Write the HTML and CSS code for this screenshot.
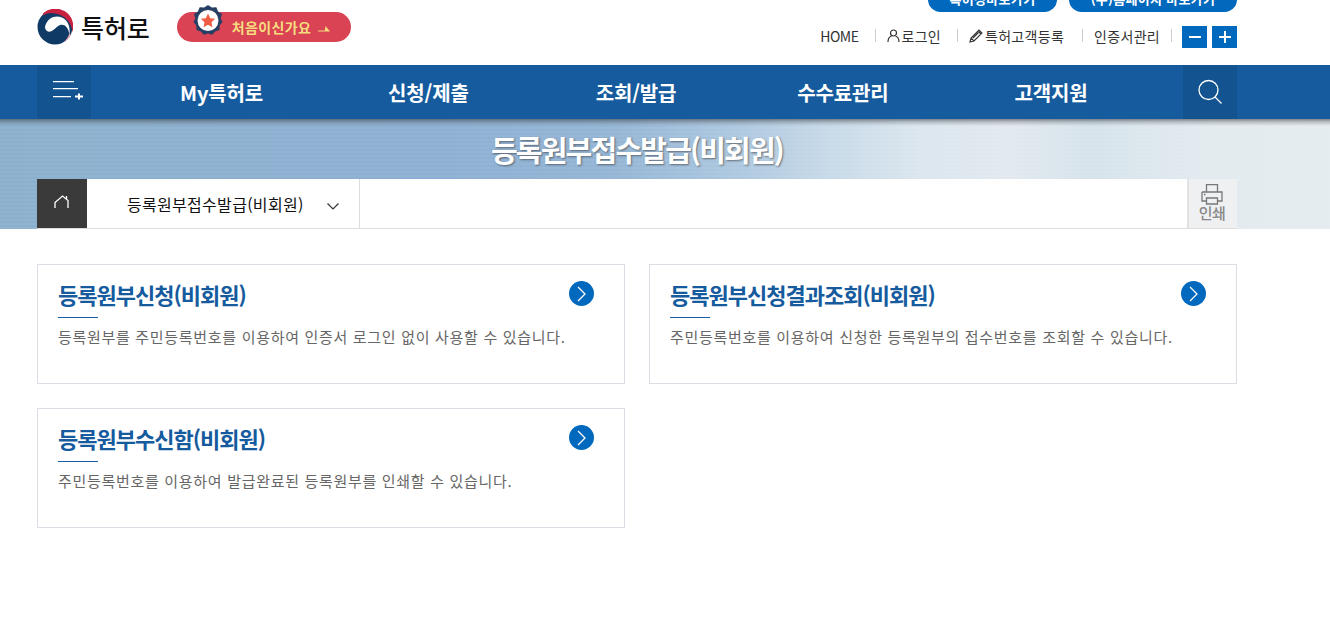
FILE: index.html
```html
<!DOCTYPE html>
<html lang="ko">
<head>
<meta charset="utf-8">
<title>등록원부접수발급(비회원)</title>
<link rel="stylesheet" href="styles.css">
</head>
<body>
<header class="top">
  <div class="top-in">
    <div class="brand">
      <svg class="logo" width="36" height="36" viewBox="0 0 36 36">
        <circle cx="18" cy="18" r="17.500" fill="#0f3a66"/>
        <path d="M6 4.500A18 18 0 0 1 35.500 23 C34.500 13 27 5.500 18 4.500 13.500 4 9.500 4 6 6.500z" fill="#c8203f"/>
        <path d="M8.500 16C11 9 18 5.500 25 8.500c6 2.500 8.500 9.500 7.500 17C31 16 25 13.500 20.500 17.500c-3.500 3-7 7-10.500 4.500-1.800-1.300-2.500-3.500-1.500-6z" fill="#fff"/>
        <path d="M33.500 26c-1.500 3.500-4 6-7 7.800 2.500-2.500 5-6 6-10z" fill="#e9a3ae"/>
      </svg>
      <span class="brand-name">특허로</span>
    </div>
    <a class="first" href="#">
      <svg class="badge" width="30" height="32" viewBox="0 0 30 32">
        <path d="M15 0l3.800 2.500 4.500-.3 1.800 4.200 3.900 2.500-1.300 4.300L29.500 17l-2.800 3.500-.2 4.500-4.300 1.400-3 3.300-4.200-1.200-4.200 1.200-3-3.300L3.500 25l-.2-4.500L.5 17l1.800-3.800L1 8.900l3.900-2.500 1.800-4.200 4.500.3z" fill="#263f63"/>
        <circle cx="15" cy="15.500" r="10.500" fill="#fff"/>
        <path d="M15 8.500l2.200 4.700 5 .6-3.700 3.400 1 5L15 19.700l-4.500 2.500 1-5-3.700-3.400 5-.6z" fill="#ef5d45"/>
      </svg>
      <span class="first-text">처음이신가요</span>
      <svg class="first-arrow" width="12" height="6" viewBox="0 0 12 6"><path d="M0 4.500h7V3.200L7.500 0l4.500 5.500H0z" fill="#f6dc7f"/></svg>
    </a>
    <div class="util">
      <div class="util-btns">
        <a class="pill pill-a" href="#">특허청바로가기</a>
        <a class="pill pill-b" href="#">(주)홈페이지 바로가기</a>
      </div>
      <div class="util-links">
        <a class="ul ul-home" href="#">HOME</a>
        <a class="ul ul-login" href="#"><svg width="13" height="14" viewBox="0 0 13 14"><circle cx="6.500" cy="4" r="3" fill="none" stroke="#333" stroke-width="1.200"/><path d="M1 13c0-4 2-5.500 3.500-6M12 13c0-4-2-5.500-3.500-6" fill="none" stroke="#333" stroke-width="1.200"/></svg>로그인</a>
        <a class="ul ul-reg" href="#"><svg width="15" height="14" viewBox="0 0 15 14"><path d="M1 13l1-4 8-8 3 3-8 8zM9 2l3 3M2 9l3 3M4 9l6-6" fill="none" stroke="#333" stroke-width="1.100"/></svg>특허고객등록</a>
        <a class="ul ul-cert" href="#">인증서관리</a>
        <span class="zoom-btns">
          <button class="zb" aria-label="축소"><svg width="12" height="12" viewBox="0 0 12 12"><path d="M0 6h12" stroke="#fff" stroke-width="2"/></svg></button>
          <button class="zb" aria-label="확대"><svg width="12" height="12" viewBox="0 0 12 12"><path d="M0 6h12M6 0v12" stroke="#fff" stroke-width="2"/></svg></button>
        </span>
      </div>
    </div>
  </div>
</header>

<nav class="gnb">
  <div class="gnb-in">
    <button class="gnb-ico gnb-menu" aria-label="전체메뉴">
      <svg width="30" height="19" viewBox="0 0 30 19"><path d="M0 .7h21M0 7.700h25M0 15.700h18" stroke="#fff" stroke-width="1.300"/><path d="M22 15.500h8M26 12.500v6" stroke="#fff" stroke-width="2"/></svg>
    </button>
    <ul class="gnb-list">
      <li class="g1">My특허로</li>
      <li class="g2">신청/제출</li>
      <li class="g3">조회/발급</li>
      <li class="g4">수수료관리</li>
      <li class="g5">고객지원</li>
    </ul>
    <button class="gnb-ico" aria-label="검색">
      <svg width="26" height="26" viewBox="0 0 26 26"><circle cx="11.500" cy="11" r="9.500" fill="none" stroke="#fff" stroke-width="1.300"/><path d="M18 18l6.500 6.500" stroke="#fff" stroke-width="1.300"/></svg>
    </button>
  </div>
</nav>

<section class="banner">
  <h1 class="banner-title">등록원부접수발급(비회원)</h1>
  <div class="crumb-wrap">
    <div class="crumb">
      <a class="crumb-home" href="#" aria-label="홈"><svg width="16" height="14" viewBox="0 0 16 14"><path d="M1 13V7.500L8.500 1 14 5.500V13M12.500 1v3" fill="none" stroke="#fff" stroke-width="1.300"/></svg></a>
      <div class="crumb-sel">
        <span>등록원부접수발급(비회원)</span>
        <svg width="12" height="7" viewBox="0 0 12 7"><path d="M.5.500L6 6l5.500-5.500" fill="none" stroke="#333" stroke-width="1.200"/></svg>
      </div>
      <div class="crumb-fill"></div>
      <a class="crumb-print" href="#">
        <svg width="22" height="21" viewBox="0 0 22 21"><path d="M5.500 8V.7h11V8M1 8h20v9h-4M5 17H1V8M5.500 14h11v6h-11zM3 10.500h1.500" fill="none" stroke="#777" stroke-width="1.300"/></svg>
        <span>인쇄</span>
      </a>
    </div>
  </div>
</section>

<main class="cards">
  <a class="card" href="#">
    <h2 class="card-title">등록원부신청(비회원)</h2>
    <p class="card-desc">등록원부를 주민등록번호를 이용하여 인증서 로그인 없이 사용할 수 있습니다.</p>
    <span class="go"><svg width="9" height="16" viewBox="0 0 9 16"><path d="M1 1l7 7-7 7" fill="none" stroke="#fff" stroke-width="1.300"/></svg></span>
  </a>
  <a class="card" href="#">
    <h2 class="card-title">등록원부신청결과조회(비회원)</h2>
    <p class="card-desc">주민등록번호를 이용하여 신청한 등록원부의 접수번호를 조회할 수 있습니다.</p>
    <span class="go"><svg width="9" height="16" viewBox="0 0 9 16"><path d="M1 1l7 7-7 7" fill="none" stroke="#fff" stroke-width="1.300"/></svg></span>
  </a>
  <a class="card" href="#">
    <h2 class="card-title">등록원부수신함(비회원)</h2>
    <p class="card-desc">주민등록번호를 이용하여 발급완료된 등록원부를 인쇄할 수 있습니다.</p>
    <span class="go"><svg width="9" height="16" viewBox="0 0 9 16"><path d="M1 1l7 7-7 7" fill="none" stroke="#fff" stroke-width="1.300"/></svg></span>
  </a>
</main>
</body>
</html>
```

FILE: styles.css
```css
* { box-sizing: border-box; }
html, body { margin: 0; padding: 0; background: #fff; overflow: hidden; }
body { font-family: "Noto Sans CJK KR", "Noto Sans", sans-serif; color: #333; height: 625px; }
a { text-decoration: none; color: inherit; }
h1, h2, p, ul { margin: 0; padding: 0; }
button { border: 0; padding: 0; cursor: pointer; }

.top { height: 65px; overflow: hidden; }
.top-in { width: 1200px; margin-left: 37px; display: flex; align-items: flex-start; height: 65px; }
.brand { display: flex; align-items: center; margin-top: 9px; }
.logo { display: block; }
.brand-name { font-size: 25px; line-height: 36px; color: #111; margin-left: 8px; letter-spacing: -.1px; font-weight: 500; }
.first { position: relative; display: flex; align-items: center; margin-left: 27px; margin-top: 12px; width: 174px; height: 30px; border-radius: 15px; background: #d94353; }
.badge { position: absolute; left: 16px; top: -7px; }
.first-text { margin-left: 55px; font-size: 14px; font-weight: 700; color: #f6dc7f; letter-spacing: .4px; }
.first-arrow { margin-left: 7px; margin-top: 3px; }

.util { margin-left: auto; display: flex; flex-direction: column; align-items: flex-end; }
.util-btns { display: flex; gap: 12px; margin-top: -13px; height: 25px; }
.pill { display: block; height: 25px; line-height: 24px; border-radius: 13px; background: #0068bd; color: #fff; font-size: 13px; font-weight: 700; text-align: center; letter-spacing: .3px; }
.pill-a { width: 129px; }
.pill-b { width: 168px; }
.util-links { display: flex; align-items: center; margin-top: 14px; height: 22px; }
.ul { display: flex; align-items: center; font-size: 14px; color: #333; height: 22px; letter-spacing: .3px; padding-bottom: 2px; }
.ul svg { margin-right: 1px; }
.ul + .ul { position: relative; }
.ul + .ul::before { content: ""; position: absolute; left: -12px; top: 3px; width: 1px; height: 13px; background: #ccc; }
.ul-home { margin-right: 29px; letter-spacing: -.5px; }
.ul-login { margin-right: 28px; }
.ul-reg { margin-right: 30px; }
.ul-cert { margin-right: 22px; position: relative; }
.ul-cert::after { content: ""; position: absolute; right: -12px; top: 3px; width: 1px; height: 13px; background: #ccc; }
.zoom-btns { display: flex; gap: 5px; }
.zb { width: 25px; height: 22px; background: #0068bd; display: flex; align-items: center; justify-content: center; }

.gnb { height: 54px; background: #155b9e; }
.gnb-in { width: 1200px; margin-left: 37px; display: flex; height: 54px; }
.gnb-ico { width: 54px; height: 54px; background: #135390; display: flex; align-items: center; justify-content: center; }
.gnb-menu { padding: 0 0 4px 8px; }
.gnb-list { flex: 1; list-style: none; position: relative; display: flex; align-items: center; font-size: 20px; font-weight: 700; color: #fff; letter-spacing: -.15px; }
.gnb-list li { white-space: nowrap; }
.g1 { margin-left: 89px; }
.g2 { margin-left: 125px; }
.g3 { margin-left: 127px; }
.g4 { margin-left: 121px; }
.g5 { margin-left: 126px; }

.banner { height: 110px; display: flex; flex-direction: column; background:
  linear-gradient(180deg, rgba(60,65,70,.6) 0, rgba(60,65,70,.25) 3px, rgba(60,65,70,0) 7px),
  repeating-linear-gradient(180deg, rgba(255,255,255,.05) 0 2px, rgba(255,255,255,0) 2px 4px),
  linear-gradient(90deg, #8bb0cd 0%, #8dafd3 33%, #94b5d5 46%, #afc9e0 56%, #c6d9e8 62%, #dbe6ee 69%, #e2e9ef 76%, #d6e3eb 82%, #e2eaef 90%, #e5ecf0 100%); }
.banner-title { height: 60px; line-height: 60px; text-align: center; font-size: 29px; font-weight: 700; color: #fff; letter-spacing: -1.8px; padding-right: 56px; text-shadow: 1px 1px 2px rgba(50,50,50,.6); }
.crumb-wrap { height: 50px; }
.crumb { width: 1200px; margin-left: 37px; height: 50px; display: flex; background: #fff; border-bottom: 1px solid #ddd; }
.crumb-home { width: 50px; background: #3a3a3a; display: flex; align-items: center; justify-content: center; padding-bottom: 4px; }
.crumb-sel { width: 273px; display: flex; align-items: center; font-size: 16px; color: #111; letter-spacing: .3px; padding-left: 40px; border-right: 1px solid #ddd; padding-top: 1px; }
.crumb-sel svg { margin-left: 23px; margin-top: 4px; }
.crumb-fill { flex: 1; }
.crumb-print { width: 50px; background: #eff0f2; border-left: 2px solid #e2e2e2; display: flex; flex-direction: column; align-items: center; color: #888; font-size: 15px; line-height: 15px; padding: 5px 2px 0 0; font-weight: 500; letter-spacing: -.6px; }
.crumb-print svg { display: block; }

.cards { width: 1200px; margin: 35px 0 0 37px; display: grid; grid-template-columns: 588px 588px; column-gap: 24px; row-gap: 24px; }
.card { position: relative; display: block; height: 120px; border: 1px solid #dcdde5; padding: 14px 20px 0; }
.card-title { font-size: 22px; line-height: 31px; font-weight: 700; color: #155b9e; letter-spacing: -1px; position: relative; padding-bottom: 8px; }
.card-title::after { content: ""; display: block; position: absolute; left: 0; bottom: 0; width: 40px; height: 1px; background: #155b9e; }
.card-desc { font-size: 15px; line-height: 20px; margin-top: 9px; color: #666; letter-spacing: .69px; }
.go { position: absolute; left: 531px; top: 16px; width: 25px; height: 25px; border-radius: 50%; background: #0068bd; display: flex; align-items: center; justify-content: center; }
```
